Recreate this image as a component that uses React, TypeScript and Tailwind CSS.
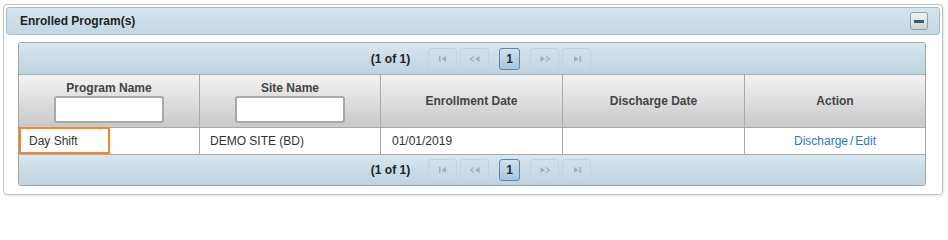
import React from "react";

const font = { fontFamily: '"Liberation Sans", Arial, sans-serif' };

const PagerIcon = ({ kind }: { kind: "first" | "prev" | "next" | "last" }) => {
  const c = "#9fb0bd";
  return (
    <svg width="12" height="8" viewBox="0 0 12 8">
      {kind === "first" && (
        <>
          <rect x="2" y="1" width="1.5" height="6" fill={c} />
          <path d="M9 1 L4.5 4 L9 7 Z" fill={c} />
        </>
      )}
      {kind === "prev" && (
        <>
          <path d="M5 1.5 L1.5 4 L5 6.5" fill="none" stroke={c} strokeWidth="1.2" />
          <path d="M10.5 1 L6 4 L10.5 7 Z" fill={c} />
        </>
      )}
      {kind === "next" && (
        <>
          <path d="M1.5 1 L6 4 L1.5 7 Z" fill={c} />
          <path d="M7 1.5 L10.5 4 L7 6.5" fill="none" stroke={c} strokeWidth="1.2" />
        </>
      )}
      {kind === "last" && (
        <>
          <path d="M3 1 L7.5 4 L3 7 Z" fill={c} />
          <rect x="8.5" y="1" width="1.5" height="6" fill={c} />
        </>
      )}
    </svg>
  );
};

const DisabledBtn = ({ kind }: { kind: "first" | "prev" | "next" | "last" }) => (
  <div className="w-[29px] h-[22px] rounded-[3px] border border-[#c3d2dc] bg-gradient-to-b from-[#d3e1ea] to-[#c6d8e4] flex items-center justify-center">
    <PagerIcon kind={kind} />
  </div>
);

const Pager = ({ bottom }: { bottom?: boolean }) => (
  <div
    className={
      "bg-gradient-to-b from-[#d8e6ef] to-[#bfd3e0] flex items-center justify-center pl-[18px] " +
      (bottom ? "h-[30px] rounded-b-[3px]" : "h-[32px] rounded-t-[3px] border-b border-[#a9a9a9]")
    }
  >
    <span className="text-[12px] font-bold text-[#222] mr-[18px]">(1 of 1)</span>
    <DisabledBtn kind="first" />
    <div className="w-[3px]" />
    <DisabledBtn kind="prev" />
    <div className="w-[10px]" />
    <div className="w-[21px] h-[22px] rounded-[3px] border border-[#5a88a8] bg-gradient-to-b from-[#cfe2ef] to-[#a5c6dc] flex items-center justify-center text-[12px] font-bold text-[#1e2a33]">
      1
    </div>
    <div className="w-[10px]" />
    <DisabledBtn kind="next" />
    <div className="w-[3px]" />
    <DisabledBtn kind="last" />
  </div>
);

const cols = ["Program Name", "Site Name", "Enrollment Date", "Discharge Date", "Action"];

export default function App() {
  return (
    <div className="w-[948px] h-[206px] bg-white pt-[4px] pl-[3px]" style={font}>
      <div className="w-[940px] h-[191px] border border-[#c2c2c2] rounded-[4px] p-[2px] shadow-[1px_1px_2px_rgba(0,0,0,0.12)]">
        <div className="h-[28px] rounded-[3px] border border-[#aabccb] bg-gradient-to-b from-[#d7e5ef] to-[#c3d6e3] flex items-center justify-between pl-[13px] pr-[11px]">
          <span className="text-[12px] font-bold text-[#222]">Enrolled Program(s)</span>
          <div className="w-[18px] h-[18px] rounded-[3px] border border-[#8f9ea9] bg-gradient-to-b from-[#f3f3f3] to-[#d3d3d3] flex items-center justify-center">
            <div className="w-[10px] h-[3px] bg-[#2e5e7c]" />
          </div>
        </div>

        <div className="mx-[12px] mt-[7px] w-[908px] border border-[#a3a3a3] rounded-[3px]">
          <Pager />
          <div className="grid grid-cols-[181px_181px_182px_182px_1fr] h-[53px] bg-gradient-to-b from-[#f3f3f3] to-[#c8c8c8] border-b border-[#a9a9a9]">
            {cols.map((c, i) => (
              <div
                key={c}
                className={
                  "flex flex-col items-center text-[12px] leading-[14px] font-bold text-[#444] " +
                  (i < 4 ? "border-r border-[#a9a9a9] " : "") +
                  (i < 2 ? "justify-start pt-[6px]" : "justify-center pb-[1px]")
                }
              >
                <span>{c}</span>
                {i < 2 && (
                  <input className="mt-[1px] w-[110px] h-[27px] bg-white border-2 border-[#a8a8a8] rounded-[3px] outline-none" />
                )}
              </div>
            ))}
          </div>
          <div className="grid grid-cols-[181px_181px_182px_182px_1fr] h-[27px] bg-white border-b border-[#a9a9a9] text-[12px] text-[#333]">
            <div className="border-r border-[#a9a9a9]">
              <div className="w-[91px] h-[27px] -mt-[1px] border-2 border-[#f0882a] flex items-center pl-[8px]">Day Shift</div>
            </div>
            <div className="border-r border-[#a9a9a9] flex items-center pl-[10px]">DEMO SITE (BD)</div>
            <div className="border-r border-[#a9a9a9] flex items-center pl-[11px]">01/01/2019</div>
            <div className="border-r border-[#a9a9a9]" />
            <div className="flex items-center justify-center text-[#1f7bc0]">
              <span>Discharge</span>
              <span className="mx-[2px]">/</span>
              <span>Edit</span>
            </div>
          </div>
          <Pager bottom />
        </div>
      </div>
    </div>
  );
}
